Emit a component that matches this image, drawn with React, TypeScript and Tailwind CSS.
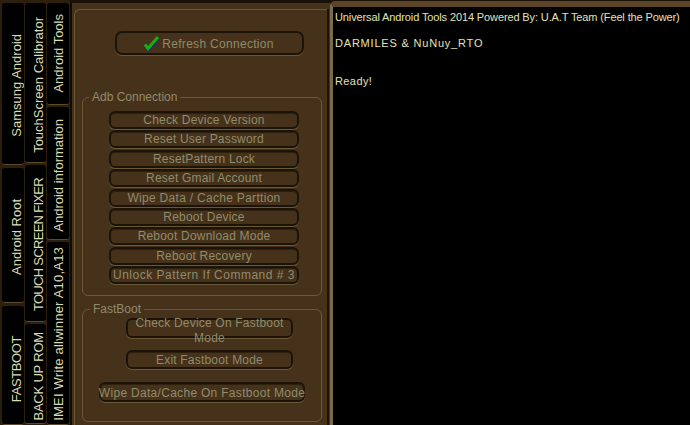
const font = "font-['Liberation_Sans',sans-serif]";

function Tab({ label, cls, shift }: { label: string; cls: string; shift: string }) {
  return (
    <div className={`${cls} shrink-0 flex items-center justify-center overflow-hidden rounded-[3px] bg-black border-b border-[#5b4a2c] ${shift} text-[13px] leading-[15px] text-[#dcdcb4] whitespace-nowrap`}>
      <span className="[writing-mode:vertical-rl] rotate-180">{label}</span>
    </div>
  );
}

function Btn({ label, cls }: { label: string; cls: string }) {
  return (
    <div className={`${cls} flex items-center justify-center whitespace-nowrap rounded-[6px] border-2 border-[#1d1409] bg-[#46321a] shadow-[0_1px_0_#6b5836,inset_0_1px_0_#2e200f] text-[12px] text-[#8f8b6c]`}>
      {label}
    </div>
  );
}

function Legend({ children, x }: { children: string; x: string }) {
  return <div className={`absolute top-[-8px] ${x} bg-[#46321a] px-[3px] text-[12px] leading-[14px] text-[#8f8b6c]`}>{children}</div>;
}

const adb = [
  ['Check Device Version', 'tracking-[0.2px]'],
  ['Reset User Password', 'tracking-[0.2px]'],
  ['ResetPattern Lock', 'tracking-[0.2px]'],
  ['Reset Gmail Account', 'tracking-[0.2px]'],
  ['Wipe Data / Cache Parttion', 'tracking-[0.3px]'],
  ['Reboot Device', 'tracking-[0.2px]'],
  ['Reboot Download Mode', 'tracking-[0.2px]'],
  ['Reboot Recovery', 'tracking-[0.2px]'],
  ['Unlock Pattern If Command # 3', 'tracking-[0.5px]'],
];

export default function App() {
  return (
    <div className={`${font} flex h-[425px] w-[690px] overflow-hidden bg-[#1a1208]`}>
      <div className="flex w-[70px] shrink-0 gap-px bg-[#2c1f0e] pl-[2px] pt-[3px]">
        <div className="flex w-[22px] flex-col gap-[3px]">
          <Tab label="Samsung Android" cls="h-[162px]" shift="pl-[6px] pt-[4px]" />
          <Tab label="Android Root" cls="h-[135px]" shift="pl-[6px] pt-[4px]" />
          <Tab label="FASTBOOT" cls="h-[119px] tracking-[-0.4px]" shift="pl-[6px] pt-[8px]" />
        </div>
        <div className="flex w-[21px] flex-col gap-[2px]">
          <Tab label="TouchScreen Calibrator" cls="h-[160px]" shift="pl-[5px] pt-[4px]" />
          <Tab label="TOUCH SCREEN FIXER" cls="h-[157px] tracking-[-0.7px]" shift="pl-[5px] pt-[4px]" />
          <Tab label="BACK UP ROM" cls="h-[100px] tracking-[-0.2px]" shift="pl-[5px] pt-[6px]" />
        </div>
        <div className="flex w-[22px] flex-col gap-[2px]">
          <Tab label="Android Tools" cls="h-[102px]" shift="pl-[1px]" />
          <Tab label="Android information" cls="h-[133px]" shift="pl-[1px] pt-[4px]" />
          <Tab label="IMEI Write allwinner A10,A13" cls="h-[183px] tracking-[0.2px]" shift="pl-[1px] pt-[2px]" />
        </div>
      </div>

      <div className="ml-0 flex w-[260px] shrink-0 border-l-2 border-[#120c05] bg-[#46321a] pt-[6px] mt-[3px] pl-[2px]">
        <div className="w-[253px] shrink-0 rounded-tl-[6px] border-l border-t border-[#6b5836] pl-[7px]">
          <div className="ml-[33px] mt-[21px] flex h-[24px] w-[189px] items-center justify-center gap-[2px] rounded-[7px] border-2 border-[#1d1409] bg-[#46321a] pr-[2px] pt-px shadow-[0_1px_0_#6b5836] text-[12px] text-[#8f8b6c] tracking-[0.3px]">
            <svg width="17" height="16" viewBox="0 0 17 16" className="-mt-px">
              <polyline points="2.5,10.5 5.5,14.5 15.5,3" fill="none" stroke="#10288a" strokeWidth="3" />
              <polyline points="2,9.5 5,13.5 15,2" fill="none" stroke="#16b010" strokeWidth="3" />
            </svg>
            Refresh Connection
          </div>
          <div className="relative mt-[42px] h-[199px] w-[240px] rounded-[6px] border border-[#6b5836]">
            <Legend x="left-[6px]">Adb Connection</Legend>
            <div className="ml-[26px] flex flex-col gap-[1.4px] pt-[13px]">
              {adb.map(([l, t]) => <Btn key={l} label={l} cls={`h-[18px] w-[190px] ${t}`} />)}
            </div>
          </div>
          <div className="relative mt-[13px] h-[113px] w-[240px] rounded-[6px] border border-[#6b5836]">
            <Legend x="left-[7px]">FastBoot</Legend>
            <div className="flex flex-col pt-[8px]">
              <div className="relative ml-[43px] h-[20px] w-[167px] rounded-[6px] border-2 border-[#1d1409] bg-[#46321a] shadow-[0_1px_0_#6b5836] text-center text-[12px] leading-[15px] text-[#8f8b6c] tracking-[0.2px]">
                <div className="absolute left-0 right-0 top-[-4px] h-[26px] px-[2px]">
                  <div>Check Device On Fastboot Mode</div>
                </div>
              </div>
              <Btn label="Exit Fastboot Mode" cls="ml-[43px] mt-[12px] h-[19px] w-[167px] tracking-[0.2px]" />
              <Btn label="Wipe Data/Cache On Fastboot Mode" cls="ml-[16px] mt-[13px] h-[20px] w-[206px] pt-px tracking-[0.3px]" />
            </div>
          </div>
        </div>
        <div className="w-[2px] shrink-0 bg-[#1d1409]" />
      </div>

      <div className="mt-px flex-1 rounded-tl-[5px] border-l-[3px] border-t-[6px] border-l-[#7a6a4a] border-t-[#5c4526] bg-black pl-[2px] pt-[4px] text-[11px] leading-[13px] text-[#e2e2b8]">
        <div className="whitespace-nowrap tracking-[-0.12px]">Universal Android Tools 2014 Powered By: U.A.T Team (Feel the Power)</div>
        <div className="mt-[13px] tracking-[0.8px]">DARMILES &amp; NuNuy_RTO</div>
        <div className="mt-[25px] tracking-[0.4px]">Ready!</div>
      </div>
    </div>
  );
}
